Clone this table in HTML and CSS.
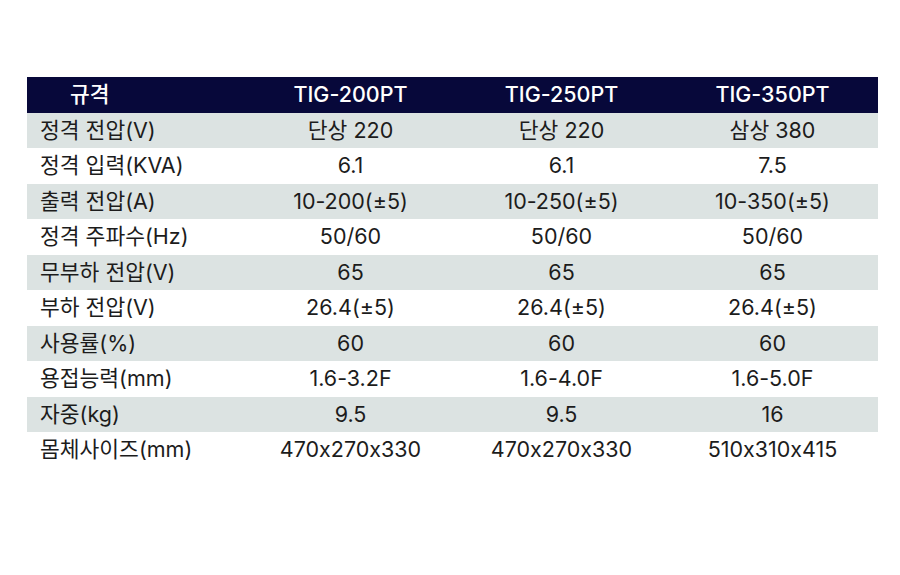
FILE: index.html
```html
<!DOCTYPE html>
<html lang="ko">
<head>
<meta charset="utf-8">
<title>TIG 규격</title>
<link rel="stylesheet" href="styles.css">
</head>
<body>
<table class="spec">
  <colgroup>
    <col class="col-label">
    <col class="col-model">
    <col class="col-model">
    <col class="col-model">
  </colgroup>
  <thead>
    <tr><th class="label-head">규격</th><th>TIG-200PT</th><th>TIG-250PT</th><th>TIG-350PT</th></tr>
  </thead>
  <tbody>
    <tr class="shade"><td>정격 전압(V)</td><td>단상 220</td><td>단상 220</td><td>삼상 380</td></tr>
    <tr><td>정격 입력(KVA)</td><td>6.1</td><td>6.1</td><td>7.5</td></tr>
    <tr class="shade"><td>출력 전압(A)</td><td>10-200(±5)</td><td>10-250(±5)</td><td>10-350(±5)</td></tr>
    <tr><td>정격 주파수(Hz)</td><td>50/60</td><td>50/60</td><td>50/60</td></tr>
    <tr class="shade"><td>무부하 전압(V)</td><td>65</td><td>65</td><td>65</td></tr>
    <tr><td>부하 전압(V)</td><td>26.4(±5)</td><td>26.4(±5)</td><td>26.4(±5)</td></tr>
    <tr class="shade"><td>사용률(%)</td><td>60</td><td>60</td><td>60</td></tr>
    <tr><td>용접능력(mm)</td><td>1.6-3.2F</td><td>1.6-4.0F</td><td>1.6-5.0F</td></tr>
    <tr class="shade"><td>자중(kg)</td><td>9.5</td><td>9.5</td><td>16</td></tr>
    <tr><td>몸체사이즈(mm)</td><td>470x270x330</td><td>470x270x330</td><td>510x310x415</td></tr>
  </tbody>
</table>
</body>
</html>
```

FILE: styles.css
```css
html, body {
  margin: 0;
  padding: 0;
  background: #ffffff;
}
body {
  font-family: Inter, "Noto Sans CJK KR", sans-serif;
  font-feature-settings: "calt" 0;
  color: #1c1c1c;
}
.spec {
  margin: 77px 0 0 27px;
  border-collapse: collapse;
  table-layout: fixed;
  width: 851px;
}
.col-label { width: 218px; }
.col-model { width: 211px; }
.spec th, .spec td {
  box-sizing: border-box;
  padding: 0;
  height: 35.5px;
  font-size: 21.5px;
  line-height: 1;
  text-align: center;
  white-space: nowrap;
}
.spec th {
  background: #07083a;
  color: #ffffff;
  font-weight: 500;
}
.spec th.label-head {
  text-align: left;
  padding-left: 43px;
}
.spec td:first-child {
  text-align: left;
  padding-left: 13px;
}
.spec tr.shade td {
  background: #dce3e2;
}
```
